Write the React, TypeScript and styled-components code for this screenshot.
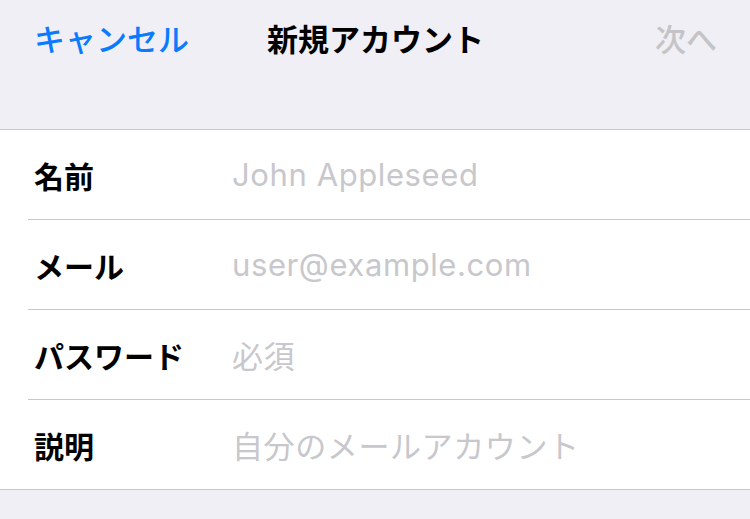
import React from 'react';
import styled, {createGlobalStyle} from "styled-components";

const GlobalStyle = createGlobalStyle`
  html, body {
    margin: 0;
    padding: 0;
    background: #f0eff5;
    font-family: Inter, "Noto Sans CJK JP", sans-serif;
  }
`

const Page = styled.div`
  width: 750px;
  height: 519px;
  background: #f0eff5;
  overflow: hidden;
`

const NavBar = styled.div`
  height: 130px;
  border-bottom: 1px solid #c8c7cc;
  display: grid;
  grid-template-columns: 1fr auto 1fr;
  align-items: start;
  padding: 18px 33px 0 34px;
  box-sizing: border-box;
`

const NavButton = styled.div<{ $align: string; $color: string }>`
  justify-self: ${p => p.$align};
  color: ${p => p.$color};
  font-size: 31px;
  font-weight: 500;
  line-height: 44px;
`

const NavTitle = styled.div`
  color: #000;
  font-size: 31px;
  font-weight: 700;
  line-height: 44px;
`

const Form = styled.div`
  background: #fff;
  border-bottom: 1px solid #c8c7cc;
  padding-left: 28px;
`

const Row = styled.div<{ $last?: boolean }>`
  display: flex;
  align-items: center;
  height: 89px;
  border-bottom: ${p => p.$last ? "none" : "1px solid #c8c7cc"};
`

const Label = styled.div`
  width: 204px;
  padding-left: 6px;
  box-sizing: border-box;
  font-size: 30px;
  font-weight: 600;
  color: #000;
  white-space: nowrap;
`

const Placeholder = styled.div`
  font-size: 31px;
  letter-spacing: 0.6px;
  color: #c7c7cc;
  white-space: nowrap;
`

const fields = [
    {label: "名前", placeholder: "John Appleseed"},
    {label: "メール", placeholder: "user@example.com"},
    {label: "パスワード", placeholder: "必須"},
    {label: "説明", placeholder: "自分のメールアカウント"},
];

const App = () => {
    return (
        <>
            <GlobalStyle/>
            <Page>
                <NavBar>
                    <NavButton $align="start" $color="#0a7aff">キャンセル</NavButton>
                    <NavTitle>新規アカウント</NavTitle>
                    <NavButton $align="end" $color="#c4c4c7">次へ</NavButton>
                </NavBar>
                <Form>
                    {fields.map((f, i) =>
                        <Row key={f.label} $last={i === fields.length - 1}>
                            <Label>{f.label}</Label>
                            <Placeholder>{f.placeholder}</Placeholder>
                        </Row>
                    )}
                </Form>
            </Page>
        </>
    );
}

export default App;
